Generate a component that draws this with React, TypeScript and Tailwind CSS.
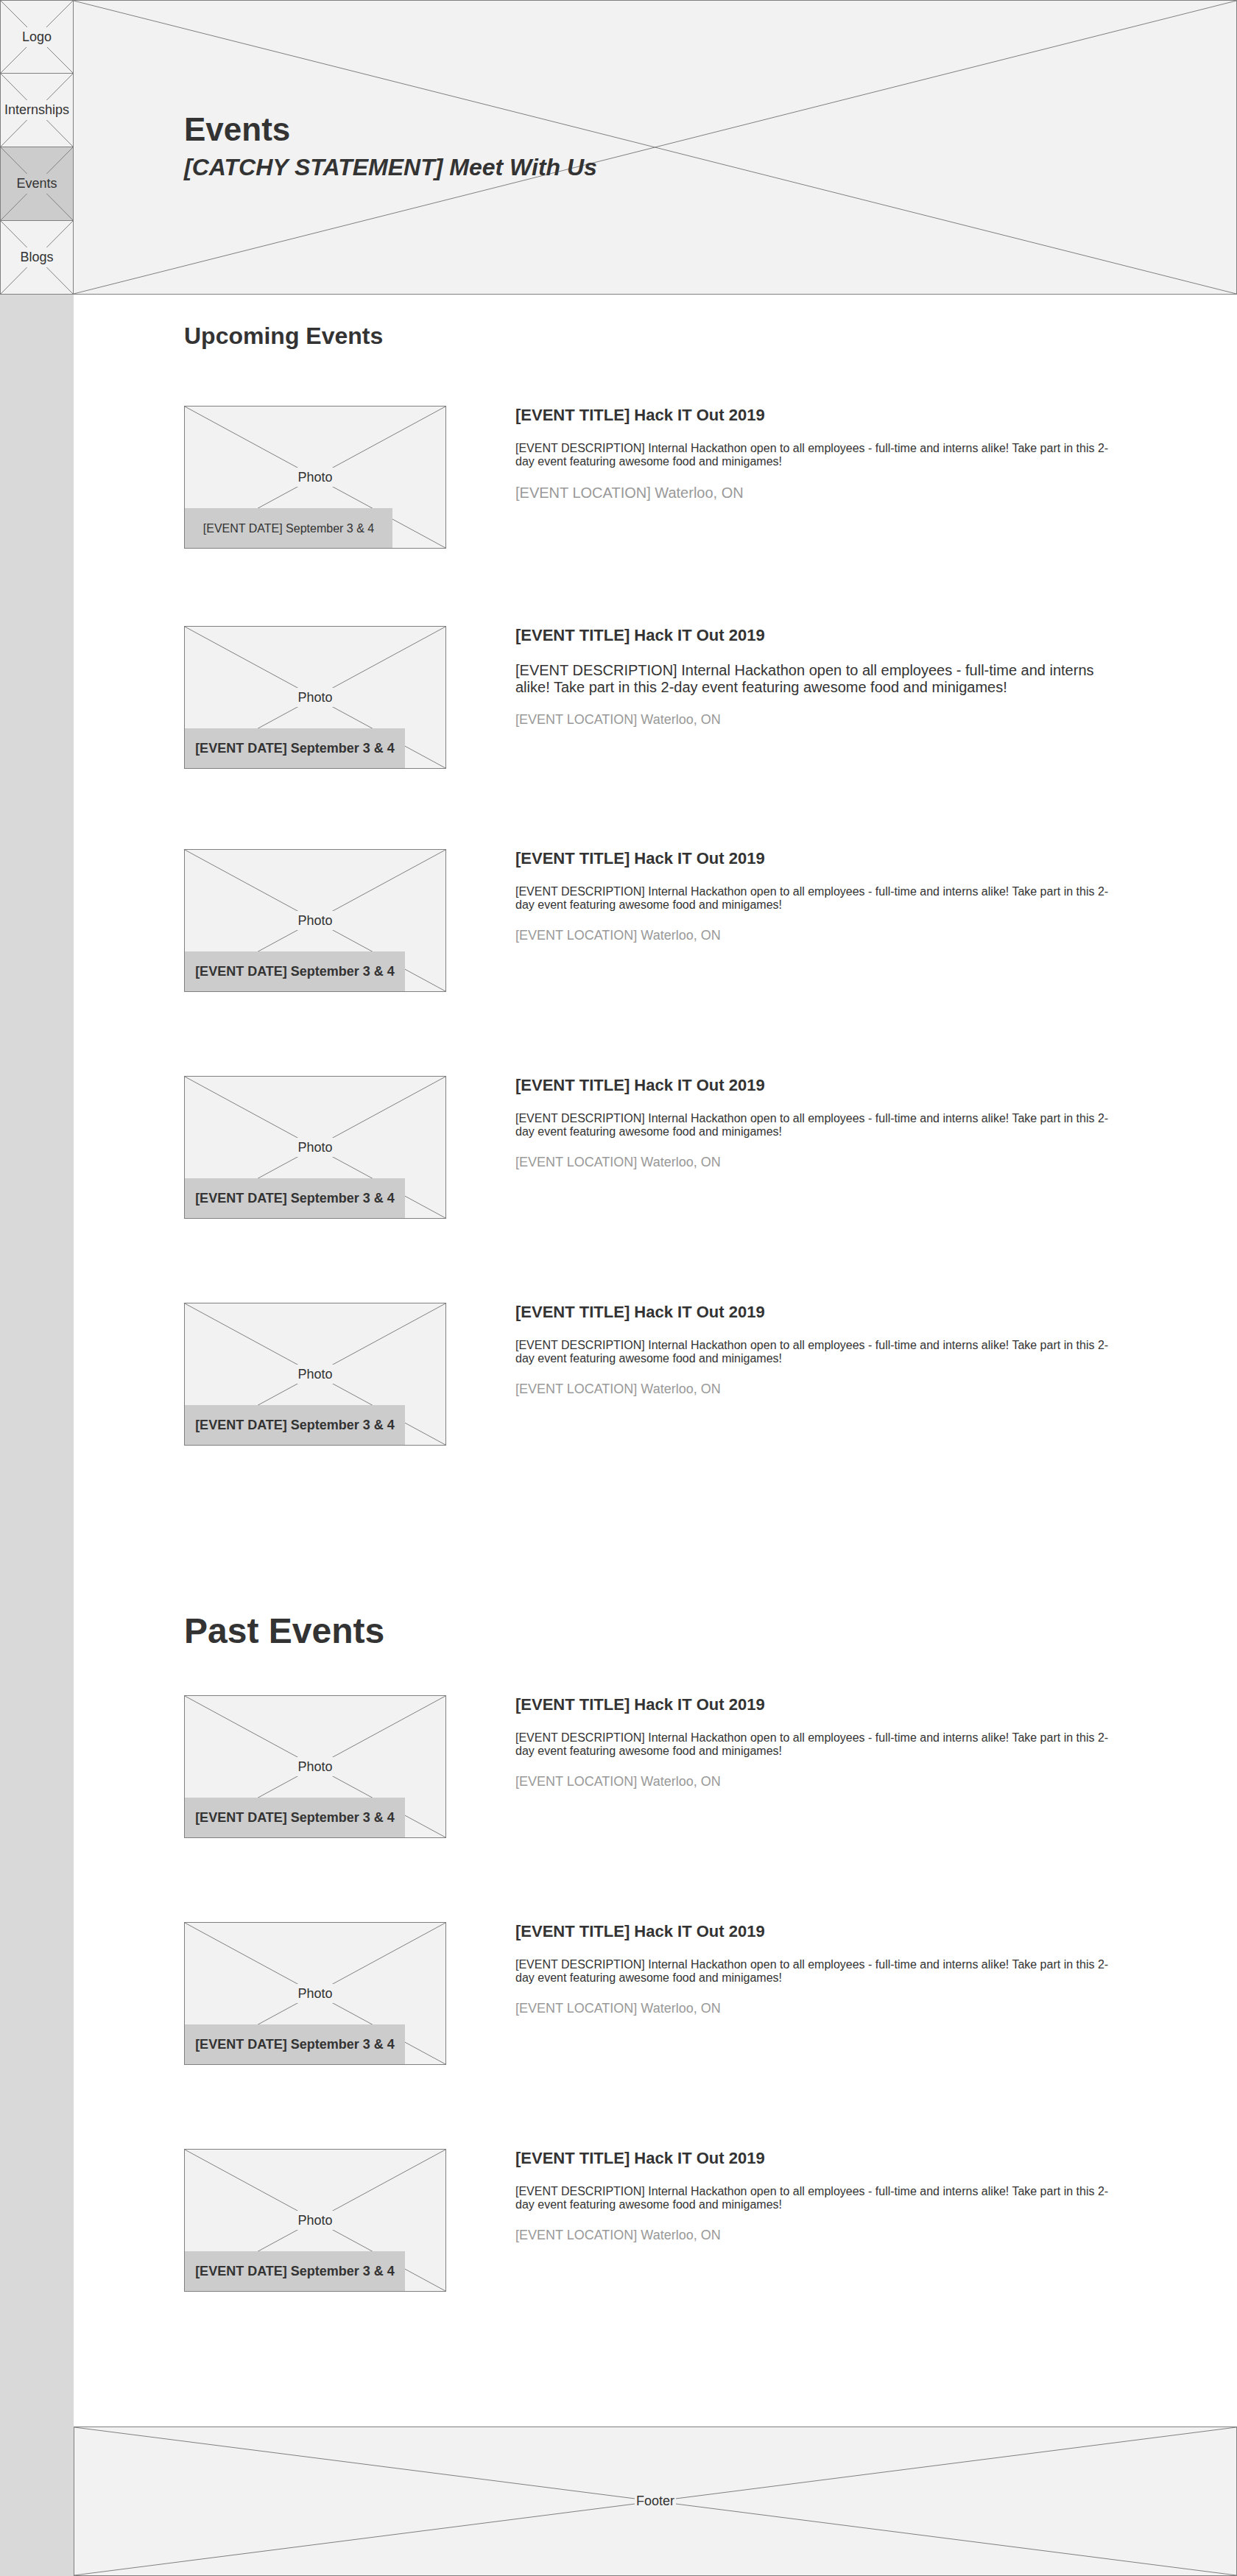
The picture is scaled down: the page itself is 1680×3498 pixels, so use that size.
import React from "react"

type Variant = {
  date: string
  desc: string
  loc: string
}

const first: Variant = {
  date: "w-[282px] text-[16px] font-normal",
  desc: "text-[16px] leading-[18px]",
  loc: "text-[20px] leading-[23px]",
}

const large: Variant = {
  date: "w-[299px] text-[18px] font-bold",
  desc: "text-[20px] leading-[23px]",
  loc: "text-[18px] leading-[21px]",
}

const normal: Variant = {
  date: "w-[299px] text-[18px] font-bold",
  desc: "text-[16px] leading-[18px]",
  loc: "text-[18px] leading-[21px]",
}

const upcoming = [
  { variant: first, gap: "mt-0" },
  { variant: large, gap: "mt-[105px]" },
  { variant: normal, gap: "mt-[109px]" },
  { variant: normal, gap: "mt-[114px]" },
  { variant: normal, gap: "mt-[114px]" },
]

const past = [
  { variant: normal, gap: "mt-0" },
  { variant: normal, gap: "mt-[114px]" },
  { variant: normal, gap: "mt-[114px]" },
]

const navItems = ["Logo", "Internships", "Events", "Blogs"]

function Cross() {
  return (
    <svg
      className="absolute inset-0 h-full w-full"
      viewBox="0 0 100 100"
      preserveAspectRatio="none"
    >
      <line x1="0" y1="0" x2="100" y2="100" stroke="#808080" strokeWidth="1" vectorEffect="non-scaling-stroke" />
      <line x1="100" y1="0" x2="0" y2="100" stroke="#808080" strokeWidth="1" vectorEffect="non-scaling-stroke" />
    </svg>
  )
}

function EventRow({ variant, gap }: { variant: Variant; gap: string }) {
  return (
    <div className={`flex items-start ${gap}`}>
      {/* Photo placeholder */}
      <div className="relative flex h-[194px] w-[356px] shrink-0 items-center justify-center border border-[#808080] bg-[#f2f2f2]">
        <Cross />
        <span className="relative bg-[#f2f2f2] px-1 py-[2px] text-[18px] leading-[22px] text-[#333]">Photo</span>
        <div
          className={`absolute bottom-0 left-0 flex h-[54px] items-center justify-center bg-[#cccccc] leading-[21px] text-[#333] ${variant.date}`}
        >
          [EVENT DATE] September 3 &amp; 4
        </div>
      </div>

      {/* Details */}
      <div className="ml-[94px] w-[815px]">
        <h3 className="text-[22px] font-bold leading-[25px] text-[#333]">[EVENT TITLE] Hack IT Out 2019</h3>
        <p className={`mt-6 text-[#333] ${variant.desc}`}>
          [EVENT DESCRIPTION] Internal Hackathon open to all employees - full-time and interns alike! Take part in
          this 2-day event featuring awesome food and minigames!
        </p>
        <p className={`mt-[22px] text-[#999] ${variant.loc}`}>[EVENT LOCATION] Waterloo, ON</p>
      </div>
    </div>
  )
}

export default function App() {
  return (
    <div className="flex min-h-screen w-full bg-white font-['Liberation_Sans',Arial,sans-serif]">
      {/* Sidebar */}
      <aside className="w-[100px] shrink-0 bg-[#d9d9d9]">
        {navItems.map((item, i) => (
          <div
            key={item}
            className={`relative flex h-[100px] items-center justify-center border-x border-b border-[#808080] ${
              i === 0 ? "border-t" : ""
            } ${item === "Events" ? "bg-[#cccccc]" : "bg-[#f2f2f2]"}`}
          >
            <Cross />
            <span
              className={`relative px-[2px] py-[3px] text-[18px] leading-[21px] text-[#333] ${
                item === "Events" ? "bg-[#cccccc]" : "bg-[#f2f2f2]"
              }`}
            >
              {item}
            </span>
          </div>
        ))}
      </aside>

      <div className="flex min-w-0 flex-1 flex-col">
        {/* Header */}
        <header className="relative h-[400px] border-y border-r border-[#808080] bg-[#f2f2f2] pl-[150px] pt-[149px]">
          <Cross />
          <div className="relative text-[#333]">
            <h1 className="text-[44px] font-bold leading-[51px]">Events</h1>
            <p className="mt-2 text-[32px] font-bold italic leading-[37px]">[CATCHY STATEMENT] Meet With Us</p>
          </div>
        </header>

        {/* Main content */}
        <main className="pb-[183px] pl-[150px] pt-[38px]">
          <h2 className="text-[32px] font-bold leading-[37px] text-[#333]">Upcoming Events</h2>
          <div className="mt-[76px]">
            {upcoming.map((e, i) => (
              <EventRow key={i} variant={e.variant} gap={e.gap} />
            ))}
          </div>

          <h2 className="mt-[224px] text-[48px] font-bold leading-[55px] text-[#333]">Past Events</h2>
          <div className="mt-[60px]">
            {past.map((e, i) => (
              <EventRow key={i} variant={e.variant} gap={e.gap} />
            ))}
          </div>
        </main>

        {/* Footer */}
        <footer className="relative flex h-[203px] items-center justify-center border border-[#808080] bg-[#f2f2f2]">
          <Cross />
          <span className="relative bg-[#f2f2f2] px-[2px] py-[2px] text-[18px] leading-[21px] text-[#333]">Footer</span>
        </footer>
      </div>
    </div>
  )
}
